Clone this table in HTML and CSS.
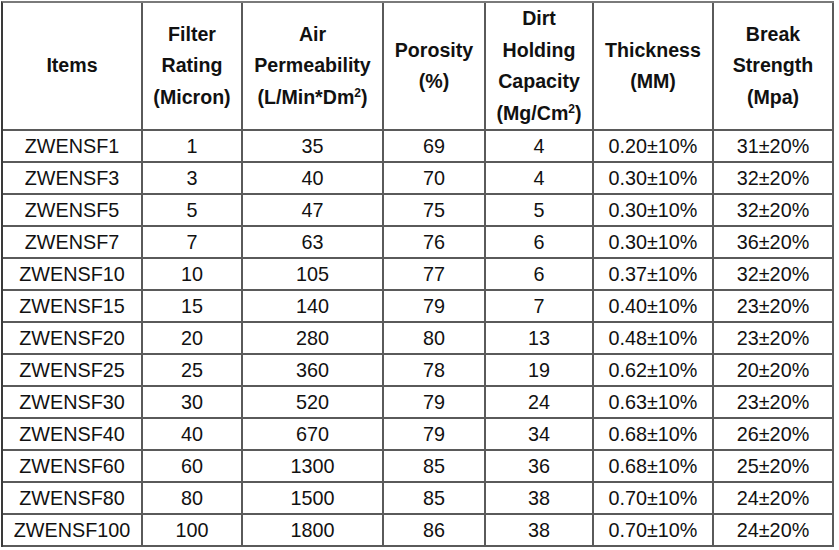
FILE: index.html
```html
<!DOCTYPE html>
<html>
<head>
<meta charset="utf-8">
<link rel="stylesheet" href="styles.css">
</head>
<body>
<table class="spec">
  <colgroup>
    <col class="c1"><col class="c2"><col class="c3"><col class="c4"><col class="c5"><col class="c6"><col class="c7">
  </colgroup>
  <thead>
    <tr class="head">
      <th>Items</th>
      <th>Filter<br>Rating<br>(Micron)</th>
      <th>Air<br>Permeability<br>(L/Min*Dm<sup>2</sup>)</th>
      <th>Porosity<br>(%)</th>
      <th>Dirt<br>Holding<br>Capacity<br>(Mg/Cm<sup>2</sup>)</th>
      <th>Thickness<br>(MM)</th>
      <th>Break<br>Strength<br>(Mpa)</th>
    </tr>
  </thead>
  <tbody>
    <tr><td>ZWENSF1</td><td>1</td><td>35</td><td>69</td><td>4</td><td>0.20±10%</td><td>31±20%</td></tr>
    <tr><td>ZWENSF3</td><td>3</td><td>40</td><td>70</td><td>4</td><td>0.30±10%</td><td>32±20%</td></tr>
    <tr><td>ZWENSF5</td><td>5</td><td>47</td><td>75</td><td>5</td><td>0.30±10%</td><td>32±20%</td></tr>
    <tr><td>ZWENSF7</td><td>7</td><td>63</td><td>76</td><td>6</td><td>0.30±10%</td><td>36±20%</td></tr>
    <tr><td>ZWENSF10</td><td>10</td><td>105</td><td>77</td><td>6</td><td>0.37±10%</td><td>32±20%</td></tr>
    <tr><td>ZWENSF15</td><td>15</td><td>140</td><td>79</td><td>7</td><td>0.40±10%</td><td>23±20%</td></tr>
    <tr><td>ZWENSF20</td><td>20</td><td>280</td><td>80</td><td>13</td><td>0.48±10%</td><td>23±20%</td></tr>
    <tr><td>ZWENSF25</td><td>25</td><td>360</td><td>78</td><td>19</td><td>0.62±10%</td><td>20±20%</td></tr>
    <tr><td>ZWENSF30</td><td>30</td><td>520</td><td>79</td><td>24</td><td>0.63±10%</td><td>23±20%</td></tr>
    <tr><td>ZWENSF40</td><td>40</td><td>670</td><td>79</td><td>34</td><td>0.68±10%</td><td>26±20%</td></tr>
    <tr><td>ZWENSF60</td><td>60</td><td>1300</td><td>85</td><td>36</td><td>0.68±10%</td><td>25±20%</td></tr>
    <tr><td>ZWENSF80</td><td>80</td><td>1500</td><td>85</td><td>38</td><td>0.70±10%</td><td>24±20%</td></tr>
    <tr><td>ZWENSF100</td><td>100</td><td>1800</td><td>86</td><td>38</td><td>0.70±10%</td><td>24±20%</td></tr>
  </tbody>
</table>
</body>
</html>
```
FILE: styles.css
```css
html, body {
  margin: 0;
  padding: 0;
  background: #ffffff;
}
body {
  padding: 1px 0 0 1px;
  font-family: "Liberation Sans", Arial, sans-serif;
  color: #111111;
}
.spec {
  border-collapse: separate;
  border-spacing: 0;
  table-layout: fixed;
  width: 833px;
  border-top: 2px solid #7a7a7a;
  border-left: 2px solid #3a3a3a;
}
.c1 { width: 140px; }
.c2 { width: 100px; }
.c3 { width: 141px; }
.c4 { width: 102px; }
.c5 { width: 108px; }
.c6 { width: 120px; }
.c7 { width: 120px; }
.spec th, .spec td {
  padding: 0;
  text-align: center;
  vertical-align: middle;
  border-right: 2px solid #5a5a5a;
  border-bottom: 2px solid #5a5a5a;
  white-space: nowrap;
}
.spec th {
  font-weight: bold;
  font-size: 19.6px;
  line-height: 31.5px;
  height: 124px;
}
.spec td {
  font-size: 19.8px;
  height: 30px;
  line-height: 30px;
}
.spec sup {
  font-size: 12px;
  line-height: 0;
  vertical-align: 7px;
}
```
